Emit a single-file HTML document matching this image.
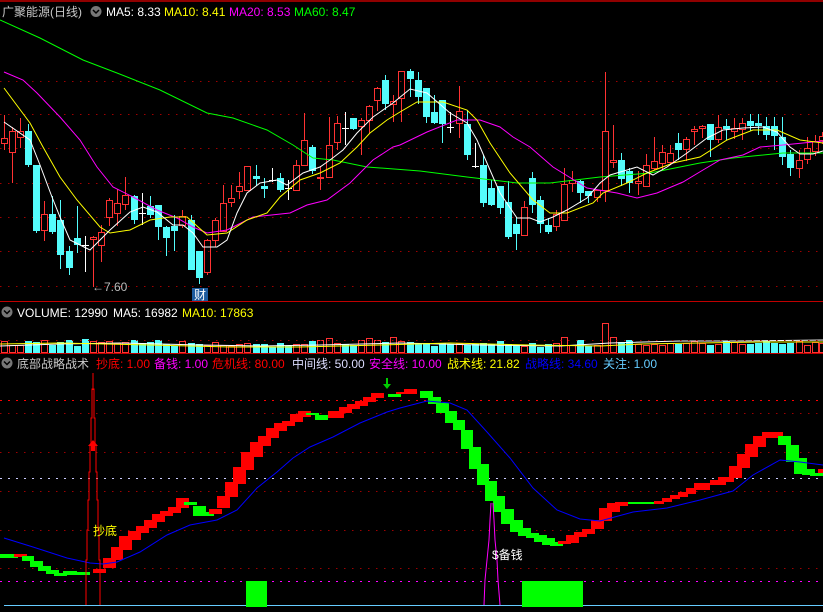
<!DOCTYPE html>
<html><head><meta charset="utf-8">
<style>
html,body{margin:0;padding:0;background:#000;width:823px;height:612px;overflow:hidden}
svg{display:block}
text{font-family:"Liberation Sans","Noto Sans CJK SC",sans-serif;font-size:12px}
</style></head><body>
<svg id="s" width="823" height="612" xmlns="http://www.w3.org/2000/svg">
<rect width="823" height="612" fill="#000"/>
<g id="g"></g>
<line x1="0" y1="1" x2="823" y2="1" stroke="#c00000" stroke-width="1.5"/>
<line x1="0" y1="301.5" x2="823" y2="301.5" stroke="#c00000"/>
<line x1="0" y1="353.5" x2="823" y2="353.5" stroke="#c00000"/>
<text x="2" y="16" fill="#c8c8c8">广聚能源(日线)</text>
<circle cx="96" cy="11.5" r="5.5" fill="#777"/><path d="M93 10l3 3 3-3" stroke="#000" stroke-width="1.5" fill="none"/>
<text x="106" y="16" fill="#fff">MA5: 8.33</text>
<text x="164" y="16" fill="#ff0">MA10: 8.41</text>
<text x="229" y="16" fill="#f0f">MA20: 8.53</text>
<text x="294" y="16" fill="#0f0">MA60: 8.47</text>
<circle cx="7" cy="312" r="5.5" fill="#777"/><path d="M4 310.5l3 3 3-3" stroke="#000" stroke-width="1.5" fill="none"/>
<text x="17" y="317" fill="#fff">VOLUME: 12990</text>
<text x="113" y="317" fill="#fff">MA5: 16982</text>
<text x="182" y="317" fill="#ff0">MA10: 17863</text>
<circle cx="7" cy="363" r="5.5" fill="#777"/><path d="M4 361.5l3 3 3-3" stroke="#000" stroke-width="1.5" fill="none"/>
<text x="17" y="368" fill="#c8c8c8">底部战略战术</text>
<text x="96" y="368" fill="#f00">抄底: 1.00</text>
<text x="154" y="368" fill="#f0f">备钱: 1.00</text>
<text x="212" y="368" fill="#f00">危机线: 80.00</text>
<text x="292" y="368" fill="#ddf">中间线: 50.00</text>
<text x="369" y="368" fill="#f0f">安全线: 10.00</text>
<text x="447" y="368" fill="#ff0">战术线: 21.82</text>
<text x="525" y="368" fill="#00f">战略线: 34.60</text>
<text x="603" y="368" fill="#6cf">关注: 1.00</text>
</svg>
<script>
var g=document.getElementById('g'),h='';
function L(pts,c,w){h+='<polyline fill="none" stroke="'+c+'" stroke-width="'+(w||1)+'" points="'+pts.map(function(p){return p.join(',')}).join(' ')+'"/>';}
function R(x,y,w,hh,f,s){h+='<rect x="'+x+'" y="'+y+'" width="'+w+'" height="'+hh+'" fill="'+(f||'none')+'"'+(s?' stroke="'+s+'"':'')+'/>';}
function D(y,c,dash){h+='<line x1="0" y1="'+y+'" x2="823" y2="'+y+'" stroke="'+c+'" stroke-dasharray="'+(dash||'1.5,6.5')+'"/>';}
[81,114,148,183,217,251,286].forEach(function(y){D(y+.5,'#a00000');});
// candles x,o(top),c(bottom),hi,lo,type
var C=[[4,138,143,115,150,'r'],[12,131,152,127,183,'r'],[20,131,137,118,148,'r'],[28,131,165,124,167,'c'],[36,165,231,165,233,'c'],[44,214,230,201,241,'r'],[52,214,232,196,234,'c'],[60,220,255,200,269,'c'],[69,251,268,246,275,'c'],[77,238,245,206,253,'c'],[85,245,245,236,272,'w'],[93,237,239,236,287,'r'],[101,232,245,225,262,'r'],[109,200,217,198,226,'r'],[117,203,213,189,226,'r'],[125,195,204,177,210,'r'],[134,196,220,195,224,'c'],[142,213,213,193,225,'w'],[150,206,215,196,218,'c'],[158,205,227,205,240,'c'],[166,227,238,226,256,'c'],[174,226,231,215,251,'c'],[182,216,225,210,228,'r'],[191,220,270,215,270,'c'],[199,251,278,251,284,'c'],[207,240,272,239,275,'r'],[215,220,240,218,247,'r'],[223,203,231,185,231,'r'],[231,198,202,185,207,'r'],[239,186,191,172,199,'r'],[247,166,190,166,191,'r'],[256,176,179,165,186,'c'],[264,186,189,178,198,'c'],[272,180,180,168,182,'w'],[280,178,190,173,192,'c'],[288,188,188,180,200,'w'],[296,165,190,160,190,'r'],[304,140,165,113,165,'r'],[312,147,171,145,174,'c'],[320,177,178,166,190,'r'],[329,145,177,117,178,'r'],[337,123,142,116,150,'r'],[345,128,128,112,145,'w'],[353,118,129,118,130,'c'],[361,120,126,118,155,'r'],[369,106,120,105,133,'r'],[377,88,100,87,111,'r'],[385,80,104,75,110,'c'],[393,101,104,95,122,'r'],[401,71,98,71,122,'r'],[410,71,79,69,97,'c'],[418,80,97,72,104,'c'],[426,88,117,88,123,'c'],[434,112,123,95,124,'c'],[442,100,124,100,143,'c'],[450,127,127,112,133,'w'],[459,111,123,86,138,'r'],[467,124,155,110,160,'c'],[475,166,166,143,168,'w'],[483,165,203,155,207,'c'],[491,188,205,180,206,'c'],[500,186,208,186,214,'c'],[508,202,237,181,239,'c'],[516,224,234,217,250,'c'],[524,207,235,201,235,'r'],[532,178,205,172,213,'c'],[540,200,224,196,233,'c'],[548,225,232,218,234,'c'],[556,214,226,210,231,'r'],[564,184,220,168,220,'r'],[572,180,183,171,192,'r'],[580,181,193,180,203,'c'],[588,191,196,191,203,'c'],[597,190,197,190,202,'r'],[605,131,190,72,202,'r'],[613,160,162,125,168,'r'],[621,160,179,153,186,'c'],[629,171,183,168,193,'c'],[638,181,183,171,195,'r'],[646,165,186,154,187,'r'],[654,161,168,137,170,'r'],[662,152,163,145,170,'r'],[670,153,162,145,165,'r'],[678,143,150,133,160,'c'],[686,139,149,137,161,'r'],[694,129,131,126,145,'r'],[702,126,128,125,138,'r'],[710,124,140,124,157,'c'],[718,127,139,115,143,'r'],[726,126,129,119,140,'c'],[734,128,131,118,139,'r'],[742,123,129,118,140,'r'],[750,121,126,114,131,'c'],[758,123,126,114,135,'c'],[766,126,135,117,140,'c'],[774,126,136,117,150,'c'],[782,137,157,117,165,'c'],[790,154,168,150,176,'c'],[799,160,168,150,178,'r'],[807,148,159,137,164,'r'],[815,141,151,135,156,'r'],[822,136,140,132,144,'r']];
C.forEach(function(k){var x=k[0],t=k[5];
 if(t=='c'){h+='<line x1="'+(x+.5)+'" y1="'+k[3]+'" x2="'+(x+.5)+'" y2="'+k[4]+'" stroke="#54fcfc"/>';R(x-3,k[1],7,Math.max(1,k[2]-k[1]),'#54fcfc');}
 else if(t=='w'){h+='<line x1="'+(x+.5)+'" y1="'+k[3]+'" x2="'+(x+.5)+'" y2="'+k[4]+'" stroke="#fff"/><line x1="'+(x-3)+'" y1="'+(k[1]+.5)+'" x2="'+(x+4)+'" y2="'+(k[1]+.5)+'" stroke="#fff"/>';}
 else{h+='<line x1="'+(x+.5)+'" y1="'+k[3]+'" x2="'+(x+.5)+'" y2="'+k[1]+'" stroke="#ff3232"/><line x1="'+(x+.5)+'" y1="'+k[2]+'" x2="'+(x+.5)+'" y2="'+k[4]+'" stroke="#ff3232"/>';R(x-2.5,k[1]+.5,6,Math.max(1,k[2]-k[1]),'none','#ff3232');}
});
L([[0,20],[40,38],[83,60],[117,73],[160,90],[207,113],[233,118],[267,130],[293,145],[313,158],[333,160],[367,167],[420,171],[467,177],[517,183],[550,183],[600,177],[650,173],[700,163],[733,158],[783,153],[823,153]],'#0f0');
L([[4,72],[23,80],[37,93],[60,117],[80,140],[97,167],[113,187],[133,197],[157,210],[177,218],[193,227],[207,233],[227,230],[253,217],[290,213],[307,205],[327,200],[350,183],[373,160],[393,147],[400,145],[427,132],[457,120],[480,120],[500,127],[513,137],[530,147],[553,167],[587,188],[617,193],[637,198],[657,193],[683,182],[703,170],[720,160],[743,155],[760,147],[783,145],[823,141]],'#f0f');
L([[4,88],[30,123],[43,147],[60,177],[77,200],[100,227],[110,233],[130,230],[150,220],[170,217],[187,217],[207,235],[227,233],[247,220],[267,213],[280,197],[300,180],[320,173],[340,163],[357,147],[370,133],[387,120],[400,112],[417,102],[443,102],[467,110],[477,120],[490,143],[510,173],[533,200],[550,213],[567,213],[593,203],[603,193],[627,183],[647,173],[673,163],[700,157],[727,140],[753,130],[777,130],[800,140],[823,143]],'#ff0');
L([[4,122],[30,140],[40,165],[52,197],[60,217],[70,240],[80,245],[90,250],[100,240],[110,230],[130,212],[143,207],[157,212],[173,225],[183,225],[193,233],[203,247],[217,247],[227,240],[237,213],[247,193],[260,183],[277,180],[287,185],[303,173],[320,167],[330,160],[343,150],[357,133],[373,117],[393,103],[410,89],[427,93],[450,113],[467,123],[477,140],[490,170],[500,193],[517,218],[530,218],[540,222],[553,217],[567,210],[587,198],[600,183],[610,175],[627,170],[637,167],[653,175],[667,167],[687,153],[707,138],[723,130],[743,128],[763,127],[777,132],[790,147],[800,154],[813,154],[823,151]],'#fff');
h+='<text x="92" y="291" fill="#bbb">←7.60</text>';
R(192,288,16,13,'#1c5a9c');h+='<text x="194" y="299" fill="#fff">财</text>';
// volume
var vh=[12,8,8,12,11,13,8,11,13,7,14,12,11,12,10,11,13,10,11,13,9,7,12,10,9,8,11,8,7,9,10,9,9,6,10,7,9,9,12,13,15,10,9,8,13,15,13,11,16,12,11,9,10,7,10,9,10,8,9,10,9,12,9,8,7,10,6,9,10,7,8,13,7,8,9,16,11,13,9,8,9,8,10,9,10,12,10,8,9,12,11,9,9,10,12,10,9,10,12,8,11,10,9];
C.forEach(function(k,i){var v=vh[i%vh.length];if(k[0]==605)v=30;if(k[0]==564||k[0]==613)v=16;var y=353-v;
 if(k[5]=='r')R(k[0]-2.5,y+.5,6,v-1,'none','#ff3232');else R(k[0]-3,y,7,v,'#54fcfc');});
L([[0,346],[60,344],[120,343],[200,345],[260,346],[320,345],[400,343],[480,345],[560,346],[610,343],[680,341],[740,341],[823,340]],'#fff');
L([[0,344],[60,343],[150,345],[230,347],[300,347],[380,345],[450,343],[530,345],[600,346],[640,344],[700,343],[760,342],[823,342]],'#ff0');
h+='<line x1="0" y1="340.5" x2="823" y2="340.5" stroke="#a00000" stroke-dasharray="1.5,6.5"/>';
// bottom panel
D(400.5,'#f00','2,6');D(413.5,'#a00000');D(452.5,'#a00000');D(478.5,'#ccf','2,6');D(491.5,'#a00000');D(530.5,'#a00000');D(568.5,'#a00000');D(581.5,'#f0f','2,6');
h+='<line x1="4" y1="605.5" x2="823" y2="605.5" stroke="#6cf"/>';
R(246,581,21,26,'#0f0');R(522,581,61,26,'#0f0');
var B=[['g',0,18,554,558],['r',14,27,554,557],['g',22,34,556,561],['g',30,43,561,567],['g',38,51,566,571],['g',46,59,570,574],['g',54,67,573,576],['g',63,77,571,575],['g',75,90,572,575],['r',93,106,569,573],['r',103,116,558,568],['r',111,123,547,560],['r',119,132,536,550],['r',128,141,531,540],['r',136,149,526,533],['r',144,157,520,528],['r',152,165,514,522],['r',160,173,511,516],['r',168,181,507,513],['r',176,189,498,508],['g',184,197,502,505],['g',193,206,506,516],['g',206,214,512,516],['r',209,222,509,514],['r',217,230,496,508],['r',225,238,482,497],['r',233,246,467,484],['r',241,254,452,470],['r',250,263,442,457],['r',258,271,436,446],['r',266,279,428,438],['r',274,287,423,431],['r',282,295,421,426],['r',290,303,414,422],['r',298,311,411,417],['g',306,319,413,415],['g',315,328,415,420],['r',328,344,411,418],['r',339,352,407,413],['r',347,360,404,409],['r',355,368,401,406],['r',363,376,397,402],['r',371,384,393,398],['g',388,401,394,397],['r',396,409,392,394],['r',404,417,389,394],['g',420,433,391,398],['g',428,441,397,404],['g',436,449,403,413],['g',445,457,411,423],['g',453,465,420,430],['g',461,473,430,449],['g',469,481,447,469],['g',477,489,464,485],['g',485,497,481,501],['g',493,505,496,512],['g',501,514,509,524],['g',510,523,520,532],['g',518,531,528,536],['g',526,539,533,538],['g',534,547,535,542],['g',542,555,538,545],['g',550,563,542,546],['r',558,571,541,544],['r',566,579,535,543],['r',574,587,532,537],['r',582,595,529,534],['r',591,604,520,529],['r',599,612,508,521],['r',607,620,503,512],['r',615,628,502,506],['g',628,656,502,504],['r',654,664,501,504],['r',662,672,498,502],['r',670,680,495,499],['r',678,688,492,497],['r',686,696,488,494],['r',694,710,483,490],['r',710,726,480,485],['r',718,734,477,482],['r',729,742,466,478],['r',737,750,454,468],['r',745,758,444,457],['r',753,766,436,447],['r',762,783,432,438],['g',778,791,436,445],['g',786,799,445,462],['g',794,807,458,474],['g',802,815,469,475],['g',810,823,473,476],['r',818,823,469,473]];
B.forEach(function(b){R(b[1],b[3],b[2]-b[1],b[4]-b[3],b[0]=='r'?'#f00':'#0f0');});
L([[4,538],[33,547],[67,558],[90,563],[103,564],[117,562],[140,552],[167,535],[190,525],[217,520],[237,510],[257,488],[277,472],[293,458],[310,447],[333,437],[360,423],[387,412],[400,408],[427,401],[450,403],[467,410],[487,432],[510,458],[533,488],[557,510],[580,519],[600,521],[633,512],[667,508],[700,500],[733,491],[753,475],[780,460],[800,462],[823,465]],'#00f');
// spikes
h+='<polyline fill="none" stroke="#f00" points="93,390 93,389 92,389 92,418 91,418 91,445 90,445 90,472 89,472 89,500 88,500 88,530 87,530 87,560 86,560 86,605"/>';
h+='<polyline fill="none" stroke="#f00" points="93,373 93,389 94,389 94,418 95,418 95,445 96,445 96,472 97,472 97,500 98,500 98,530 99,530 99,560 100,560 100,605"/>';
h+='<path d="M93 440l-5 6h3v5h4v-5h3z" fill="#f00"/>';
h+='<polyline fill="none" stroke="#f0f" points="491,503 490,520 489,540 487,560 485,580 484,605"/>';
h+='<polyline fill="none" stroke="#f0f" points="493,503 494,520 495,540 497,560 498,580 500,605"/>';
h+='<path d="M386 378v6h-3l4 5 4-5h-3v-6z" fill="#0c0"/>';
h+='<text x="93" y="535" fill="#ff0">抄底</text>';
h+='<text x="492" y="559" fill="#fff">$备钱</text>';
g.innerHTML=h;
</script>
</body></html>
